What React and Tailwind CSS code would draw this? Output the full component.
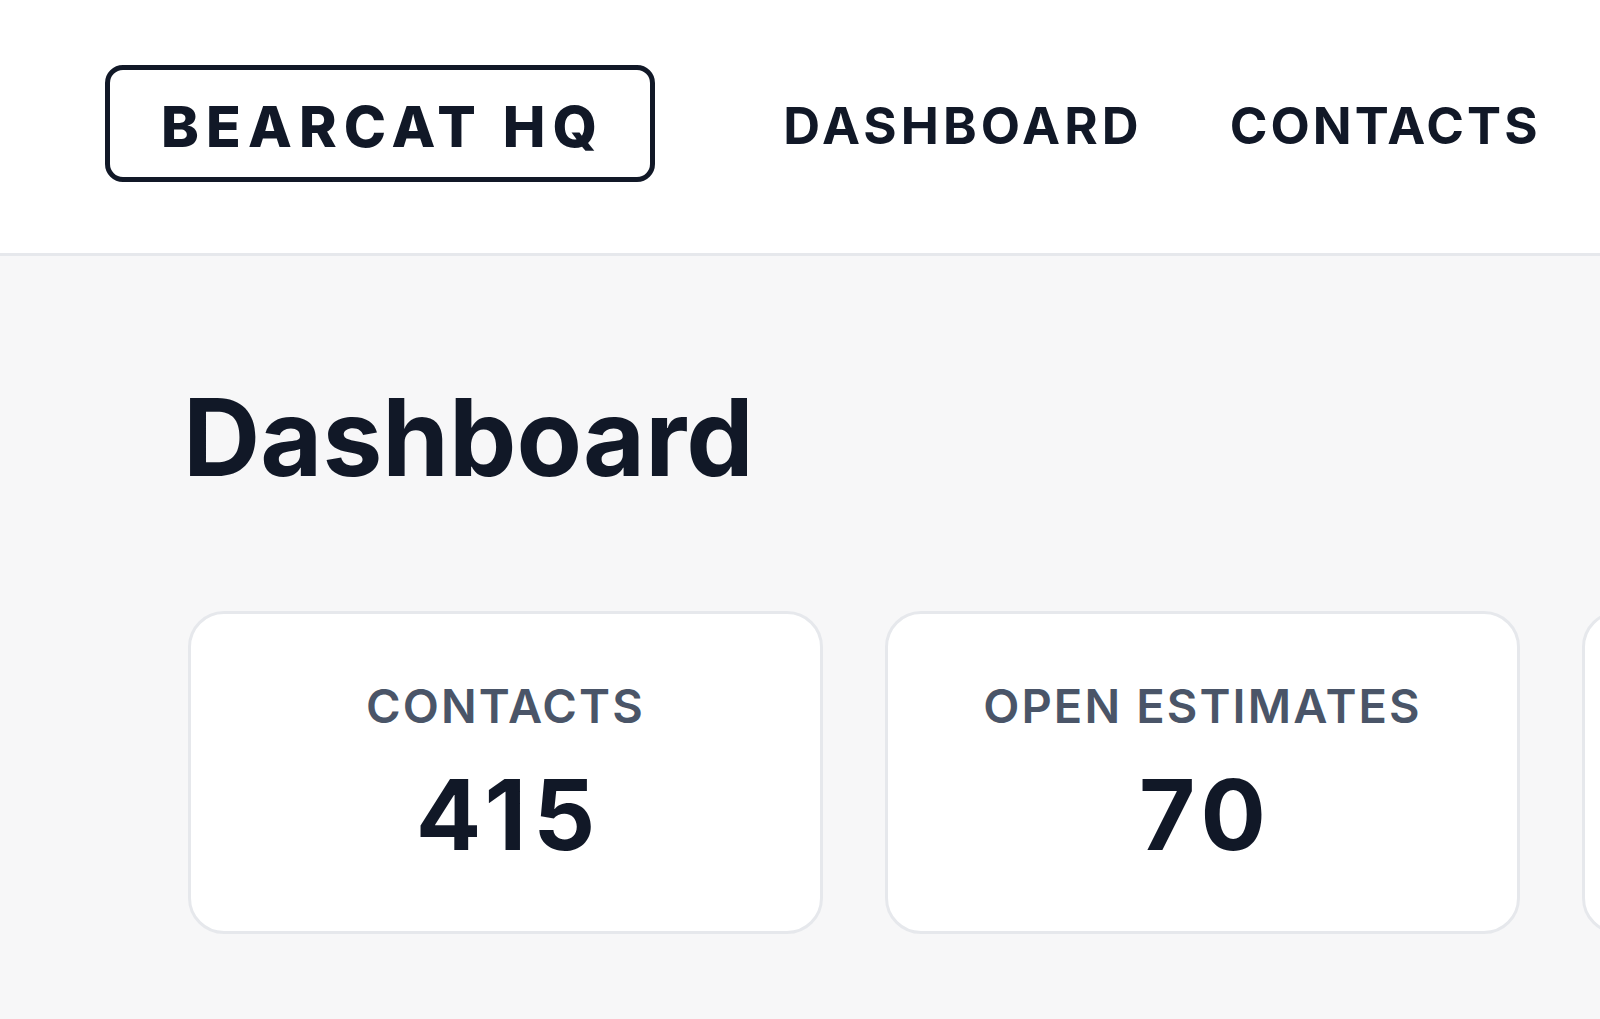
import React from 'react'

// third card is only partly on screen; its contents are off the right edge
const stats = [
  { label: 'CONTACTS', value: '415' },
  { label: 'OPEN ESTIMATES', value: '70' },
  { label: '', value: '' },
]

function StatCard({ label, value }) {
  return (
    <div className="shrink-0 w-[635px] h-[323px] bg-white border-[3px] border-[#e6e8ec] rounded-[36px] flex flex-col items-center justify-center">
      {label && (
        <>
          <div className="text-[47px] font-semibold tracking-[0.045em] text-[#4a5568] leading-none">{label}</div>
          <div className="mt-[37px] text-[97px] font-bold text-[#111827] leading-none tracking-[0.07em] mr-[-0.07em]">{value}</div>
        </>
      )}
    </div>
  )
}

export default function App() {
  return (
    <div className="min-h-screen bg-[#f7f7f8] overflow-hidden" style={{ fontFamily: 'Inter, "Noto Sans", sans-serif' }}>
      <header className="h-[256px] bg-white border-b-[3px] border-[#e6e8ec] flex items-center pl-[105px] pb-[7px]">
        <div className="h-[117px] pl-[51px] pr-[46px] border-[5px] border-[#111827] rounded-[18px] flex items-center">
          <span className="mt-[7px] text-[57px] font-extrabold tracking-[0.125em] text-[#111827] leading-none">BEARCAT HQ</span>
        </div>
        <nav className="flex items-center ml-[128px] gap-[87px] pt-[5px] whitespace-nowrap">
          <span className="text-[51px] font-bold tracking-[0.08em] text-[#111827] leading-none">DASHBOARD</span>
          <span className="text-[51px] font-bold tracking-[0.06em] text-[#111827] leading-none">CONTACTS</span>
        </nav>
      </header>
      <main className="pl-[183px] pt-[128px]">
        <h1 className="text-[107px] font-bold text-[#111827] leading-none">Dashboard</h1>
        <div className="ml-[5px] mt-[120px] flex gap-[62px]">
          {stats.map((s, i) => (
            <StatCard key={i} label={s.label} value={s.value} />
          ))}
        </div>
      </main>
    </div>
  )
}
